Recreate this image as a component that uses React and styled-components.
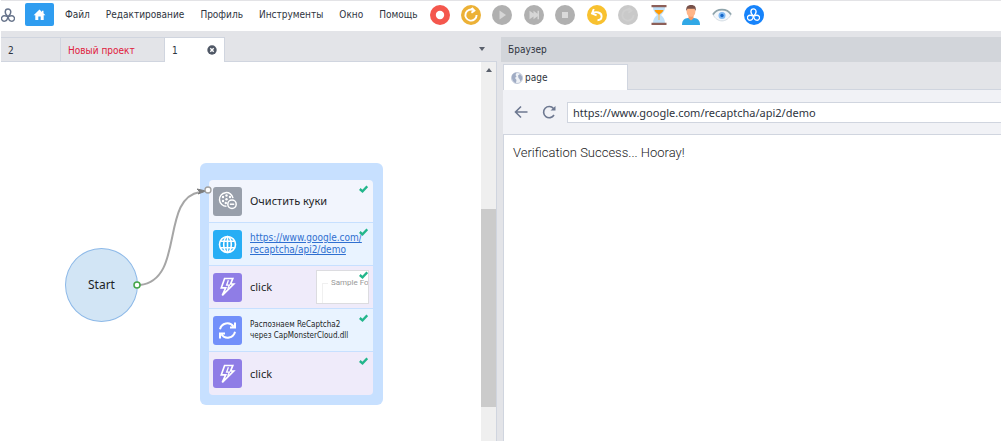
import React from "react";
import styled, { createGlobalStyle, css } from "styled-components";

const GlobalStyle = createGlobalStyle`
  *, *::before, *::after { box-sizing: border-box; }
  body { margin: 0; background: #fff; }
  button, input { font: inherit; color: inherit; }
  button { padding: 0; border: 0; background: none; cursor: pointer; }
  svg { display: block; }
`;

const uiFont = css`font-family: "DejaVu Sans Condensed", "Noto Sans", sans-serif;`;
const nodeFont = css`font-family: "Noto Sans", sans-serif;`;

const Page = styled.div`
  ${uiFont}
  min-height: 100vh;
  display: flex;
  flex-direction: column;
  padding: 0 3px 0 1px;
  font-size: 10px;
  color: #2e3440;
`;

const Header = styled.header`
  display: flex;
  align-items: center;
  height: 31px;
  padding-bottom: 3px;
  border-top: 1px solid #e3e3e6;
`;

const LogoMark = styled.span`
  width: 14px;
  margin-right: 10px;
  color: #66738a;
`;

const HomeButton = styled.button`
  width: 29px;
  height: 23px;
  display: grid;
  place-items: center;
  border-radius: 2px;
  background: #2f9df0;
  color: #fff;
`;

const Menu = styled.nav`
  display: flex;
  gap: 16px;
  margin-left: 11px;
`;

const MenuItem = styled.button`
  line-height: 14px;
  white-space: nowrap;
`;

const Tools = styled.div`
  display: flex;
  justify-content: space-between;
  align-items: center;
  width: 334px;
  margin-left: 12px;
`;

const Tool = styled.button`
  width: 20px;
  height: 20px;
  flex: none;
  border-radius: 50%;
  display: grid;
  place-items: center;
  background: ${(p) => p.$bg || "transparent"};
`;

const Workspace = styled.main`
  flex: 1;
  display: grid;
  grid-template-columns: minmax(0, 496fr) minmax(0, 500fr);
  gap: 4px;
  padding-top: 6px;
  background: #e3e4e8;
`;

const Panel = styled.section`
  display: flex;
  flex-direction: column;
  min-width: 0;
`;

const ProjectTabs = styled.div`
  display: flex;
  height: 25px;
  border-bottom: 1px solid #d0d5df;
`;

const ProjectTab = styled.div`
  width: ${(p) => p.$width}px;
  height: 25px;
  display: flex;
  align-items: center;
  justify-content: space-between;
  padding: 0 7px;
  border: solid #d0d5df;
  border-width: 1px 1px 0 0;
  background: ${(p) => (p.$active ? "#fff" : "transparent")};
  color: ${(p) => (p.$alert ? "#e0203c" : "inherit")};
`;

const TabsMenu = styled.button`
  margin-left: auto;
  width: 30px;
  display: grid;
  place-items: center;
`;

const CanvasRow = styled.div`
  flex: 1;
  display: flex;
  border-right: 1px solid #d0d5df;
  background: #fff;
`;

const Canvas = styled.div`
  ${nodeFont}
  position: relative;
  flex: 1;
  min-width: 0;
  min-height: 360px;
  overflow: hidden;
  color: #1c1f26;
`;

const Scrollbar = styled.div`
  width: 15px;
  display: flex;
  flex-direction: column;
  align-items: center;
  background: #efefef;
`;

const ScrollArrow = styled.button`
  width: 15px;
  height: 16px;
  display: grid;
  place-items: center;
`;

const ScrollTrack = styled.div`
  flex: 1;
  width: 100%;
  display: flex;
  flex-direction: column;
`;

const ScrollThumb = styled.div`
  height: 198px;
  margin: auto 0 34px;
  background: #cbcbcb;
`;

const StartNode = styled.div`
  position: absolute;
  left: 64px;
  top: 186px;
  width: 73px;
  height: 74px;
  border-radius: 50%;
  border: 1px solid #8db9e8;
  background: #d2e5f5;
  display: grid;
  place-items: center;
  font-size: 12px;
  line-height: 16px;
`;

const Group = styled.div`
  position: absolute;
  left: 199px;
  top: 101px;
  width: 183px;
  padding: 17px 10px 10px 9px;
  border-radius: 6px;
  background: #c7e0ff;
`;

const Steps = styled.ol`
  margin: 0;
  padding: 0;
  list-style: none;
  border-radius: 4px;
  overflow: hidden;
`;

const Step = styled.li`
  position: relative;
  height: 43px;
  display: flex;
  align-items: center;
  gap: 8px;
  padding-left: 4px;
  background: ${(p) => p.$bg};
  font-size: 11px;
  line-height: 12px;
  border-bottom: 1px solid #c7e0ff;
  &:last-child { border-bottom: 0; }
`;

const StepIcon = styled.span`
  width: 29px;
  height: 29px;
  flex: none;
  display: grid;
  place-items: center;
  border-radius: 3px;
  background: ${(p) => p.$bg};
`;

const StepText = styled.span`
  white-space: nowrap;
`;

const StepNote = styled(StepText)`
  ${uiFont}
  font-size: 8px;
  line-height: 11px;
`;

const StepLink = styled.a`
  ${uiFont}
  font-size: 10px;
  color: #2f6fd0;
  text-decoration: underline;
`;

const Preview = styled.span`
  width: 53px;
  height: 34px;
  margin: 0 4px 0 auto;
  overflow: hidden;
  border: 1px solid #dcdce0;
  background: #fff;
  padding: 7px 0 0 5px;
`;

const PreviewLegend = styled.span`
  position: relative;
  display: block;
  padding-left: 9px;
  font: 8px/10px Roboto, sans-serif;
  white-space: nowrap;
  color: #999;
  &::before {
    content: "";
    position: absolute;
    left: 0;
    top: 5px;
    width: 6px;
    height: 24px;
    border: solid #f0f0f0;
    border-width: 1px 0 0 1px;
  }
`;

const Done = styled.svg`
  position: absolute;
  top: 5px;
  right: 5px;
`;

const Links = styled.svg`
  position: absolute;
  left: 0;
  top: 0;
  pointer-events: none;
`;

const PanelTitle = styled.h2`
  margin: 0;
  height: 25px;
  padding-left: 7px;
  font-size: 10px;
  font-weight: 400;
  line-height: 25px;
  background: #d2d5da;
`;

const BrowserBody = styled.div`
  flex: 1;
  display: flex;
  flex-direction: column;
  padding-left: 2px;
`;

const BrowserTabs = styled.div`
  display: flex;
  height: 28px;
  padding-top: 2px;
  border-bottom: 1px solid #d0d5df;
`;

const BrowserTab = styled.button`
  width: 125px;
  height: 26px;
  display: flex;
  align-items: center;
  gap: 2px;
  padding-left: 7px;
  border: solid #d0d5df;
  border-width: 1px 1px 0 1px;
  background: #fff;
`;

const AddressBar = styled.form`
  display: flex;
  align-items: center;
  height: 45px;
  padding-left: 10px;
  border-bottom: 1px solid #d0d5df;
  background: #f1f2f6;
`;

const NavButton = styled.button`
  width: 16px;
  height: 20px;
  margin-right: 12px;
  display: grid;
  place-items: center;
  color: #6d7890;
`;

const Address = styled.input`
  flex: 1;
  min-width: 0;
  height: 21px;
  margin-left: -2px;
  padding: 0 5px;
  border: 1px solid #d0d5df;
  border-right: 0;
  border-radius: 0;
  background: #fff;
  ${nodeFont}
  font-size: 11px;
  outline: 0;
`;

const Document = styled.article`
  flex: 1;
  padding: 9px;
  border-left: 1px solid #d0d5df;
  background: #fff;
  font: 300 13px/18px Roboto, sans-serif;
  color: #222;
`;

const Trefoil = ({ size, color = "currentColor" }) => (
  <svg width={size} height={size} viewBox="0 0 16 16" fill="none" stroke={color} strokeWidth="1.6" strokeLinejoin="round">
    <path d="M8 10C5.4 7.6 4.6 5.6 4.9 4.2A3.1 3.1 0 0 1 11.1 4.2C11.4 5.6 10.6 7.6 8 10Z" />
    <path d="M8 10C7.2 13.4 5.9 15 4.4 15A3.1 3.1 0 0 1 1.4 9.9C2.5 8.6 4.8 8.6 8 10Z" />
    <path d="M8 10C8.8 13.4 10.1 15 11.6 15A3.1 3.1 0 0 0 14.6 9.9C13.5 8.6 11.2 8.6 8 10Z" />
  </svg>
);

const HomeIcon = () => (
  <svg width="13" height="12" viewBox="0 0 13 12" fill="currentColor">
    <path d="M6.5.6L.6 6.2h1.7V11h3V7.6h2.400V11h3V6.2h1.7L10.500 4.3V1.7H9v1.2z" />
  </svg>
);

const BoltIcon = () => (
  <svg width="17" height="20" viewBox="0 0 17 20" fill="none" stroke="#fff" strokeWidth="1.7">
    <path d="M5.6 1.5H13.8L11.6 7H14.7L3.3 18.4L6.7 10.8H2.3Z" />
    <path d="M9.4 3.2L7.6 8.2H10.4L8.7 11.8" strokeWidth="1.3" />
  </svg>
);

const GlobeIcon = () => (
  <svg width="19" height="19" viewBox="0 0 19 19" fill="none" stroke="#fff" strokeWidth="1.6">
    <circle cx="9.5" cy="9.5" r="8" />
    <ellipse cx="9.5" cy="9.5" rx="3.8" ry="8" />
    <path d="M9.5 1.5v16M2.6 6.2h13.8M2.6 12.8h13.8" />
  </svg>
);

const CookieIcon = () => (
  <svg width="20" height="20" viewBox="0 0 20 20" fill="none" stroke="#fff" strokeWidth="1.5">
    <path d="M8.5 15.2A6.8 6.8 0 1 1 15 7.2" />
    <g fill="#fff" stroke="none">
      <circle cx="5" cy="6" r="1.2" /><circle cx="8.5" cy="4.5" r="1.2" />
      <circle cx="12" cy="6" r="1.2" /><circle cx="5" cy="10" r="1.2" />
      <circle cx="8.5" cy="8.2" r="1.2" /><circle cx="7.8" cy="12" r="1.2" />
    </g>
    <circle cx="14" cy="13.2" r="4.2" />
    <path d="M11.8 13.2h4.4" />
  </svg>
);

const SyncIcon = () => (
  <svg width="19" height="19" viewBox="0 0 19 19" fill="none" stroke="#fff" strokeWidth="2">
    <path d="M2 8.2A7.5 7.5 0 0 1 15.5 5.5M17 1.5V6.5H12" />
    <path d="M17 10.8A7.5 7.5 0 0 1 3.5 13.5M2 17.5V12.5H7" />
  </svg>
);

const RecordIcon = () => (
  <svg width="20" height="20"><circle cx="10" cy="10" r="4.2" fill="#fff" /></svg>
);

const ReloadIcon = ({ color = "#fff" }) => (
  <svg width="20" height="20" viewBox="0 0 20 20" fill="none" stroke={color} strokeWidth="1.9">
    <path d="M12.8 5.200A5.600 5.600 0 1 0 15.600 10M10.800 2.800L13.400 5.600L10.400 7.800" />
  </svg>
);

const PlayIcon = () => (
  <svg width="20" height="20"><path d="M7.500 5.500v9l6.500-4.500z" fill="#d6d6d6" /></svg>
);

const NextIcon = () => (
  <svg width="20" height="20"><path d="M5.500 5.800v8.400l4-2.800v2.800l4-3v3h1.500V5.800h-1.500v3l-4-3v2.800z" fill="#d6d6d6" /></svg>
);

const StopIcon = () => (
  <svg width="20" height="20"><path d="M7 7h6v6H7z" fill="#dadada" /></svg>
);

const UndoIcon = () => (
  <svg width="20" height="20" viewBox="0 0 20 20" fill="none" stroke="#fff" strokeWidth="1.9">
    <path d="M5.200 8.200C9 6.200 14.800 7.200 14.600 11.500C14.500 13.800 12.800 15.200 10.500 15.200M6.800 4L5 8.400L9.600 10.400" />
  </svg>
);

const HourglassIcon = () => (
  <svg width="18" height="20" viewBox="0 0 18 20">
    <path d="M3 2h12c0 4-2 6-4 8 2 2 4 4 4 8H3c0-4 2-6 4-8-2-2-4-4-4-8z" fill="#bfe0f8" />
    <path d="M4.500 5h9C13 7 10.500 8.500 9 10 7.500 8.500 5 7 4.500 5z" fill="#ff9b05" />
    <path d="M8.500 9h1v6h-1z" fill="#ffb54a" />
    <path d="M1.500 0h15v2.200h-15zM1.500 17.800h15V20h-15z" fill="#8d5f58" />
  </svg>
);

const PersonIcon = () => (
  <svg width="18" height="20" viewBox="0 0 18 20">
    <path d="M0 20c0-5 2.500-6.500 6-7h6c3.500.5 6 2 6 7z" fill="#31a8e6" />
    <path d="M6.500 10h5v3.500L9 15.500l-2.500-2z" fill="#f29a68" />
    <ellipse cx="9" cy="6.500" rx="4.400" ry="5.300" fill="#ffb588" />
    <path d="M4.300 6C3.800 2 5.500 0 9.200 0s5.200 2 4.500 6L12.500 3.800H5.500z" fill="#765049" />
  </svg>
);

const EyeIcon = () => (
  <svg width="20" height="14" viewBox="0 0 20 14">
    <path d="M1 6.500C5 0 15 0 19 6.500 15 15 5 15 1 6.500z" fill="#f4f7fa" stroke="#d4dde4" strokeWidth="1" />
    <path d="M1 6.500C5 0 15 0 19 6.500" fill="none" stroke="#8fa4ab" strokeWidth="1.800" />
    <circle cx="10" cy="7.500" r="3.500" fill="#82bbf4" />
    <circle cx="10" cy="7.500" r="1.700" fill="#1767c9" />
  </svg>
);

const CloseIcon = () => (
  <svg width="10" height="10" viewBox="0 0 10 10">
    <circle cx="5" cy="5" r="4.700" fill="#505866" />
    <path d="M3.300 3.300l3.400 3.400M6.700 3.300L3.300 6.700" stroke="#fff" strokeWidth="1.400" />
  </svg>
);

const PageIcon = () => (
  <svg width="12" height="12" viewBox="0 0 12 12">
    <circle cx="6" cy="6" r="5.500" fill="#eef1f6" stroke="#b3bccf" strokeWidth=".8" />
    <path d="M1 3.500C2 1.500 4 .5 5.500 1L4.500 3l1 1.500L4 6l1.500 2-.5 3C2.500 10.500.5 8 1 3.500zM7 3.500l2-1.500 2 2.500v3L9.500 9.500 8.500 7 7.500 6z" fill="#a0acc4" />
  </svg>
);

const ArrowLeft = () => (
  <svg width="14" height="14" viewBox="0 0 14 14" fill="none" stroke="currentColor" strokeWidth="1.600">
    <path d="M13.500 7H1.500M7 1.500L1.500 7L7 12.500" />
  </svg>
);

const Refresh = () => (
  <svg width="14" height="14" viewBox="0 0 14 14" fill="none" stroke="currentColor" strokeWidth="1.600">
    <path d="M11.500 3.500A5.600 5.600 0 1 0 12 10" />
    <path d="M8.500 5.500H13.500V1z" fill="currentColor" stroke="none" />
  </svg>
);

const Check = () => (
  <Done width="9" height="8" viewBox="0 0 9 8">
    <path d="M.8 4L3.500 6.300L8.300 1.300" fill="none" stroke="#22b68b" strokeWidth="2.400" />
  </Done>
);

const Triangle = ({ up }) => (
  <svg width="6" height="4"><path d={up ? "M0 4h6L3 0z" : "M0 0h6L3 4z"} fill="#5a606c" /></svg>
);

const menu = ["Файл", "Редактирование", "Профиль", "Инструменты", "Окно", "Помощь"];

const tools = [
  { label: "Запись", bg: "#f4574d", icon: <RecordIcon /> },
  { label: "Перезапуск", bg: "#ecb136", icon: <ReloadIcon /> },
  { label: "Пуск", bg: "#b0b0b0", icon: <PlayIcon /> },
  { label: "Шаг", bg: "#b0b0b0", icon: <NextIcon /> },
  { label: "Стоп", bg: "#b0b0b0", icon: <StopIcon /> },
  { label: "Отменить", bg: "#f8c12f", icon: <UndoIcon /> },
  { label: "Повторить", bg: "#c9c9c9", icon: <ReloadIcon color="#cfcfcf" /> },
  { label: "Ожидание", icon: <HourglassIcon /> },
  { label: "Профиль пользователя", icon: <PersonIcon /> },
  { label: "Наблюдение", icon: <EyeIcon /> },
  { label: "Сервис", bg: "#1683fb", icon: <Trefoil size={13} color="#fff" /> },
];

export default function App() {
  return (
    <Page>
      <GlobalStyle />
      <Header>
        <LogoMark><Trefoil size={14} /></LogoMark>
        <HomeButton aria-label="Домой"><HomeIcon /></HomeButton>
        <Menu>{menu.map((m) => <MenuItem key={m}>{m}</MenuItem>)}</Menu>
        <Tools>
          {tools.map((t) => <Tool key={t.label} aria-label={t.label} $bg={t.bg}>{t.icon}</Tool>)}
        </Tools>
      </Header>
      <Workspace>
        <Panel>
          <ProjectTabs>
            <ProjectTab $width={60}>2</ProjectTab>
            <ProjectTab $width={104} $alert>Новый проект</ProjectTab>
            <ProjectTab $width={60} $active>
              1<button aria-label="Закрыть вкладку"><CloseIcon /></button>
            </ProjectTab>
            <TabsMenu aria-label="Список вкладок"><Triangle /></TabsMenu>
          </ProjectTabs>
          <CanvasRow>
            <Canvas>
              <StartNode>Start</StartNode>
              <Group>
                <Steps>
                  <Step $bg="#f2f5fd">
                    <StepIcon $bg="#989fab"><CookieIcon /></StepIcon>
                    <StepText>Очистить куки</StepText>
                    <Check />
                  </Step>
                  <Step $bg="#e9f3ff">
                    <StepIcon $bg="#27aef5"><GlobeIcon /></StepIcon>
                    <StepLink href="https://www.google.com/recaptcha/api2/demo">
                      https://www.google.com/<br />recaptcha/api2/demo
                    </StepLink>
                    <Check />
                  </Step>
                  <Step $bg="#efebfa">
                    <StepIcon $bg="#8f7de6"><BoltIcon /></StepIcon>
                    <StepText>click</StepText>
                    <Preview><PreviewLegend>Sample Fo</PreviewLegend></Preview>
                    <Check />
                  </Step>
                  <Step $bg="#e9f3ff">
                    <StepIcon $bg="#7290fa"><SyncIcon /></StepIcon>
                    <StepNote>Распознаем ReCaptcha2<br />через CapMonsterCloud.dll</StepNote>
                    <Check />
                  </Step>
                  <Step $bg="#efebfa">
                    <StepIcon $bg="#8f7de6"><BoltIcon /></StepIcon>
                    <StepText>click</StepText>
                    <Check />
                  </Step>
                </Steps>
              </Group>
              <Links width="400" height="360" fill="none">
                <path d="M139 223C184 218 159 136 199 130" stroke="#a6a6a6" strokeWidth="2" />
                <path d="M196 127L205 129L197 132L199 130z" fill="#7c7c7c" stroke="#7c7c7c" />
                <circle cx="207" cy="128" r="3" fill="#fff" stroke="#a0a0a0" strokeWidth="1.300" />
                <circle cx="136" cy="223" r="3" fill="#fff" stroke="#43a548" strokeWidth="1.500" />
              </Links>
            </Canvas>
            <Scrollbar>
              <ScrollArrow aria-label="Вверх"><Triangle up /></ScrollArrow>
              <ScrollTrack><ScrollThumb /></ScrollTrack>
            </Scrollbar>
          </CanvasRow>
        </Panel>
        <Panel>
          <PanelTitle>Браузер</PanelTitle>
          <BrowserBody>
            <BrowserTabs><BrowserTab><PageIcon />page</BrowserTab></BrowserTabs>
            <AddressBar onSubmit={(e) => e.preventDefault()}>
              <NavButton type="button" aria-label="Назад"><ArrowLeft /></NavButton>
              <NavButton type="button" aria-label="Обновить"><Refresh /></NavButton>
              <Address aria-label="Адрес" defaultValue="https://www.google.com/recaptcha/api2/demo" />
            </AddressBar>
            <Document>Verification Success... Hooray!</Document>
          </BrowserBody>
        </Panel>
      </Workspace>
    </Page>
  );
}
